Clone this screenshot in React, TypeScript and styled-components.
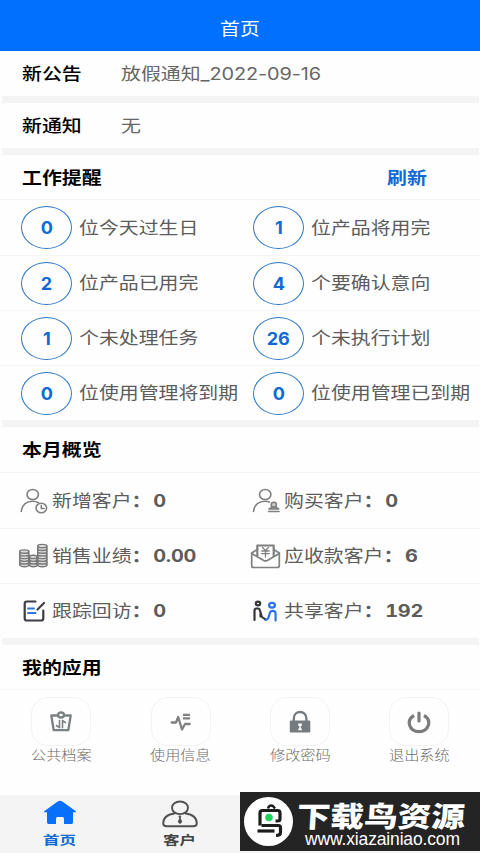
import styled, { createGlobalStyle } from 'styled-components';
import type { ReactNode } from 'react';

const GlobalStyle = createGlobalStyle`
  * {
    box-sizing: border-box;
  }

  body {
    margin: 0;
    background-color: #fff;
    font-family: Inter, 'Noto Sans CJK SC', sans-serif;
    overflow: hidden;
  }

  svg {
    display: block;
    flex-shrink: 0;
  }
`;

const Page = styled.div`
  display: flex;
  flex-direction: column;
  width: 480px;
  height: 853px;
  background-color: #fefefe;
`;

const Header = styled.header`
  display: flex;
  justify-content: center;
  align-items: center;
  height: 51px;
  padding-top: 7px;
  background-color: #0070ff;
  color: #fff;
`;

/* Wide lettering used all over the app */
const Wide = styled.span<{ $origin?: string }>`
  display: inline-block;
  font-size: 17px;
  line-height: 24px;
  white-space: nowrap;
  transform: scaleX(1.17);
  transform-origin: ${({ $origin }) => $origin || 'left'} center;
`;

const Notice = styled.div`
  display: grid;
  grid-template-columns: 99px 1fr;
  align-items: center;
  justify-items: start;
  height: 45px;
  padding-top: 1px;
  padding-left: 22px;
  color: #000;
  font-weight: 500;

  ${Wide} + ${Wide} {
    color: #666;
    font-weight: 400;
  }
`;

const DateText = styled.span`
  letter-spacing: -0.1px;
`;

const Divider = styled.div`
  height: 6.8px;
  margin: 0 1.5px;
  background-color: #f4f4f4;
`;

const SectionTitle = styled.div`
  display: grid;
  grid-template-columns: 365px 1fr;
  align-items: center;
  justify-items: start;
  height: 45.7px;
  padding-top: 2px;
  padding-left: 22px;
  border-bottom: 1px solid #f6f6f6;
  color: #000;
  font-weight: 700;
`;

const Refresh = styled(Wide)`
  color: #0f6ad4;
`;

const Row = styled.div`
  display: grid;
  grid-template-columns: 232px 1fr;
  height: 55px;
  padding-left: 21px;

  & + & {
    border-top: 1px solid #f6f6f6;
  }
`;

const Task = styled.div`
  display: flex;
  align-items: center;
  gap: 7px;
  color: #5c5c5c;
`;

const Bubble = styled.div`
  display: flex;
  justify-content: center;
  align-items: center;
  width: 51px;
  height: 43px;
  border: 1.4px solid #2e79c4;
  border-radius: 50%;
  color: #0f6ad4;
  font-weight: 700;

  ${Wide} {
    padding-top: 1px;
    font-size: 17.5px;
    transform: scaleX(1.03);
  }
`;

const Stat = styled.div`
  display: flex;
  align-items: center;
  padding-top: 1px;
  color: #5c5c5c;

  svg {
    margin-left: -3px;
    margin-right: 2px;
  }
`;

const Colon = styled.span`
  font-weight: 700;
`;

const Value = styled.b`
  margin-left: 1.5px;
  font-weight: 700;
  letter-spacing: -0.2px;
  font-variant-numeric: tabular-nums;
`;

const Apps = styled.div`
  display: grid;
  grid-template-columns: repeat(4, 119.4px);
  padding: 7px 0 0 1.5px;
  flex: 1;
`;

const AppItem = styled.div`
  display: flex;
  flex-direction: column;
  align-items: center;
  color: #6c6c6c;

  ${Wide} {
    margin-top: 1px;
    font-size: 13.2px;
    line-height: 16px;
    font-weight: 300;
    transform: scaleX(1.15);
  }
`;

const AppTile = styled.div`
  display: flex;
  justify-content: center;
  align-items: center;
  width: 60px;
  height: 49px;
  border: 1px solid #f3f3f3;
  border-radius: 17px;
`;

const TabBar = styled.nav`
  position: relative;
  display: grid;
  grid-template-columns: repeat(4, 120px);
  height: 58px;
  background-color: #f4f4f4;
`;

const Tab = styled.div<{ $active?: boolean }>`
  display: grid;
  grid-template-rows: 30px 22px;
  justify-items: center;
  align-content: start;
  padding-top: 5px;
  color: ${({ $active }) => ($active ? '#0f6ad4' : '#444')};

  ${Wide} {
    font-size: 12.5px;
    line-height: 22px;
    font-weight: 700;
    transform: scaleX(1.32);
  }
`;

/* Lies over the right half of the tab bar */
const Banner = styled.div`
  position: absolute;
  right: 0;
  bottom: 2px;
  display: flex;
  align-items: center;
  width: 240px;
  height: 59px;
  padding-left: 4px;
  background-color: #242424;
  color: #fff;
`;

const BannerText = styled.div`
  display: flex;
  flex-direction: column;
  align-items: flex-start;
  margin: 4px 0 0 4px;
`;

const BannerName = styled.div`
  font-family: 'Noto Sans CJK SC', sans-serif;
  font-size: 28.5px;
  line-height: 31px;
  font-weight: 900;
  white-space: nowrap;
  transform: scaleX(1.18) skewX(-3deg);
  transform-origin: left center;
`;

const BannerUrl = styled.div`
  margin-left: 8px;
  font-family: 'Liberation Sans', sans-serif;
  font-size: 17.5px;
  line-height: 19px;
  letter-spacing: -0.15px;
  white-space: nowrap;
`;

const lineProps = {
  fill: 'none',
  stroke: '#808080',
  strokeWidth: 1.6,
  strokeLinecap: 'round' as const,
  strokeLinejoin: 'round' as const,
};

const NewCustomerIcon = () => (
  <svg width="32" height="30" {...lineProps}>
    <ellipse cx="14.7" cy="8.5" rx="5.7" ry="5" />
    <path d="M3.3 25.5C4 18.5 9 15.2 14.5 15.2c2.5 0 4.5.6 6 1.5" />
    <ellipse cx="23.3" cy="22" rx="5.3" ry="4.7" />
    <path d="M23.3 19.5v3h2.7" />
  </svg>
);

const BuyCustomerIcon = () => (
  <svg width="32" height="30" {...lineProps}>
    <ellipse cx="15.2" cy="8.5" rx="5.7" ry="5" />
    <path d="M3.5 25.5C4.2 18.5 9.5 15.2 15 15.2c1.8 0 3.2.3 4.3.8" />
    <ellipse cx="23.8" cy="18.7" rx="2.6" ry="2.4" fill="#ccc" />
    <path d="M22.5 21l-3.5 2h9.7l-3.5-2z" fill="#999" />
    <path d="M18.7 25.5h10.3" />
  </svg>
);

const CoinStack = ({ x, rx, top }: { x: number; rx: number; top: number }) => {
  const coins = [];
  for (let y = 24; y >= top; y -= 2.7) {
    coins.push(<ellipse key={y} cx={x} cy={y} rx={rx} ry="1.7" fill="#ddd" />);
  }
  return (
    <>
      <path d={`M${x - rx} ${top}V24M${x + rx} ${top}V24`} />
      {coins}
    </>
  );
};

const SalesIcon = () => (
  <svg width="32" height="30" {...lineProps} strokeWidth={1.35} stroke="#777">
    <CoinStack x={6.3} rx={4.5} top={10} />
    <CoinStack x={15.3} rx={3.8} top={15} />
    <CoinStack x={24.3} rx={4.6} top={5} />
  </svg>
);

const ReceivableIcon = () => (
  <svg width="32" height="30" {...lineProps} strokeWidth={1.7}>
    <path d="M7.3 8.5L1.7 12v12.5q0 2 2 2h23.6q2 0 2-2V12l-5.6-3.5" />
    <path d="M1.7 12.5l12 7q1.8.9 3.6 0l12-7" />
    <path d="M7.3 15V4.5h16.4V15" strokeWidth={2.2} />
    <path d="M12.5 6.5l3 3 3-3M11.8 10h7.4M11.8 12.7h7.4M15.5 9.5V16" strokeWidth={1.3} />
  </svg>
);

const FollowIcon = () => (
  <svg width="32" height="30" {...lineProps} strokeWidth={2.2} stroke="#3d3d45">
    <path d="M17.5 5.5H9q-2.3 0-2.3 2.3v14.4q0 2.3 2.3 2.3h14q2.3 0 2.3-2.3V14.5" />
    <path d="M19.5 13.5l6.5-6.5" />
    <path d="M10 12.5h6M10 17h7.5" stroke="#3172dc" strokeWidth={1.8} />
  </svg>
);

const ShareIcon = () => (
  <svg width="32" height="30" {...lineProps} strokeWidth={2.2} stroke="#34343c">
    <ellipse cx="8" cy="7.5" rx="2.2" ry="1.8" />
    <path d="M4.5 24V15q0-2.5 2-2.5h1.5q1.5 0 1.8 1.5l1.7 6q.5 1.7 3.5 3M10.5 17.5v3" />
    <g stroke="#2a72e8">
      <ellipse cx="22" cy="9.2" rx="2.9" ry="2.4" />
      <path d="M15.5 24q2.5-.5 3-2.5l1.3-4.5q.7-2.2 3-2.2 2.8 0 2.8 2.7v7" />
    </g>
  </svg>
);

const ArchiveIcon = () => (
  <svg width="24" height="24" {...lineProps} strokeWidth={2.3} stroke="#7b8083">
    <path d="M9 5.5H2.3l2.4 14.7h14.6L21.7 5.5H15" />
    <ellipse cx="12" cy="5" rx="3" ry="2.5" />
    <path d="M10.5 10.5v7.2l-3-2.2M13.5 17.7v-7.2l3 2.2" strokeWidth={1.6} />
  </svg>
);

const PulseIcon = () => (
  <svg width="24" height="24" {...lineProps} strokeWidth={2.3} stroke="#808080">
    <path d="M2.7 12.5h4.3l2.2-5.5 3.8 12.5 3-5.5h4.7" />
    <path d="M14 4.8h7M14 8.4h7" strokeLinecap="butt" />
  </svg>
);

const LockIcon = () => (
  <svg width="24" height="24">
    <path d="M5.8 12V8.5C5.8 -.2 18.4 -.2 18.4 8.5V12" fill="none" stroke="#767b7f" strokeWidth="2.3" />
    <rect x="1.8" y="10.5" width="20.5" height="12" rx="1" fill="#767b7f" />
    <path d="M10.3 13.5h3.5v2.5h-1v2.5h1v1.7h-3.5V18.5h1v-2.5h-1z" fill="#fff" />
  </svg>
);

const PowerIcon = () => (
  <svg width="24" height="24" {...lineProps} strokeWidth={3.2} stroke="#7c7c7c">
    <path d="M7 5.5C-1.5 10.5 2.5 21.7 12 21.7S25.5 10.5 17 5.5" strokeLinecap="butt" />
    <path d="M12 3v8" />
  </svg>
);

const HomeIcon = () => (
  <svg width="34" height="26" fill="#0870fa">
    <path d="M14.7 1.5q2.3-1.3 4.6 0L32.500 11q1.3 1.3-.7 1.3H30v10q0 1.7-1.7 1.7H21v-5.500q0-1.500-1.500-1.500h-5q-1.500 0-1.500 1.500V24H5.700Q4 24 4 22.300v-10H2.200q-2 0-.7-1.300z" />
  </svg>
);

const CustomerIcon = () => (
  <svg width="36" height="28" {...lineProps} strokeWidth={1.9} stroke="#505050">
    <ellipse cx="18" cy="7.8" rx="8" ry="6.3" />
    <path d="M12.5 13.5C5 14.5 1.2 18.5 1.2 23.5q0 2.7 3.5 2.7h26.6q3.5 0 3.5-2.7c0-5-3.8-9-11.3-10" />
    <path d="M17.3 16h1.4l-.4 2.5 1.500 3.500-1.800 1.500-1.800-1.500 1.500-3.500z" fill="#505050" strokeWidth={1} />
  </svg>
);

const BirdLogo = () => (
  <svg width="49" height="49" fill="none" stroke="#1d1d1d" strokeWidth="3.2">
    <circle cx="24.5" cy="24.5" r="24.5" fill="#fff" stroke="none" />
    <path d="M24 11.5q1-4 5-2.5l2 2.5" strokeWidth="2.5" />
    <path d="M16 28.5V16q0-2.5 2.5-2.5h15q2.5 0 2.5 2.5v6q0 2-2.500 2h-2" />
    <path d="M17.5 28.5h17q2 0 2 2v5q0 3-4.500 3" />
    <path d="M13.5 34h17" />
    <circle cx="25" cy="20.5" r="3.8" fill="#20d35b" stroke="none" />
  </svg>
);

const tasks = [
  ['0', '位今天过生日', '1', '位产品将用完'],
  ['2', '位产品已用完', '4', '个要确认意向'],
  ['1', '个未处理任务', '26', '个未执行计划'],
  ['0', '位使用管理将到期', '0', '位使用管理已到期'],
];

type StatProps = { icon: ReactNode; label: string; value: string };

const StatItem = ({ icon, label, value }: StatProps) => (
  <Stat>
    {icon}
    <Wide>
      {label}
      <Colon>：</Colon>
      <Value>{value}</Value>
    </Wide>
  </Stat>
);

const TaskItem = ({ count, label }: { count: string; label: string }) => (
  <Task>
    <Bubble>
      <Wide $origin="center">{count}</Wide>
    </Bubble>
    <Wide>{label}</Wide>
  </Task>
);

const apps = [
  { icon: <ArchiveIcon />, label: '公共档案' },
  { icon: <PulseIcon />, label: '使用信息' },
  { icon: <LockIcon />, label: '修改密码' },
  { icon: <PowerIcon />, label: '退出系统' },
];

const App = () => {
  return (
    <Page>
      <GlobalStyle />
      <Header>
        <Wide $origin="center">首页</Wide>
      </Header>
      <Notice>
        <Wide>新公告</Wide>
        <Wide>
          放假通知<DateText>_2022-09-16</DateText>
        </Wide>
      </Notice>
      <Divider />
      <Notice>
        <Wide>新通知</Wide>
        <Wide>无</Wide>
      </Notice>
      <Divider />
      <SectionTitle>
        <Wide>工作提醒</Wide>
        <Refresh>刷新</Refresh>
      </SectionTitle>
      {tasks.map(([leftCount, leftLabel, rightCount, rightLabel]) => (
        <Row key={leftLabel}>
          <TaskItem count={leftCount} label={leftLabel} />
          <TaskItem count={rightCount} label={rightLabel} />
        </Row>
      ))}
      <Divider />
      <SectionTitle>
        <Wide>本月概览</Wide>
      </SectionTitle>
      <Row>
        <StatItem icon={<NewCustomerIcon />} label="新增客户" value="0" />
        <StatItem icon={<BuyCustomerIcon />} label="购买客户" value="0" />
      </Row>
      <Row>
        <StatItem icon={<SalesIcon />} label="销售业绩" value="0.00" />
        <StatItem icon={<ReceivableIcon />} label="应收款客户" value="6" />
      </Row>
      <Row>
        <StatItem icon={<FollowIcon />} label="跟踪回访" value="0" />
        <StatItem icon={<ShareIcon />} label="共享客户" value="192" />
      </Row>
      <Divider />
      <SectionTitle>
        <Wide>我的应用</Wide>
      </SectionTitle>
      <Apps>
        {apps.map(({ icon, label }) => (
          <AppItem key={label}>
            <AppTile>{icon}</AppTile>
            <Wide $origin="center">{label}</Wide>
          </AppItem>
        ))}
      </Apps>
      <TabBar>
        <Tab $active>
          <HomeIcon />
          <Wide $origin="center">首页</Wide>
        </Tab>
        <Tab>
          <CustomerIcon />
          <Wide $origin="center">客户</Wide>
        </Tab>
        <Banner>
          <BirdLogo />
          <BannerText>
            <BannerName>下载鸟资源</BannerName>
            <BannerUrl>www.xiazainiao.com</BannerUrl>
          </BannerText>
        </Banner>
      </TabBar>
    </Page>
  );
};

export default App;
